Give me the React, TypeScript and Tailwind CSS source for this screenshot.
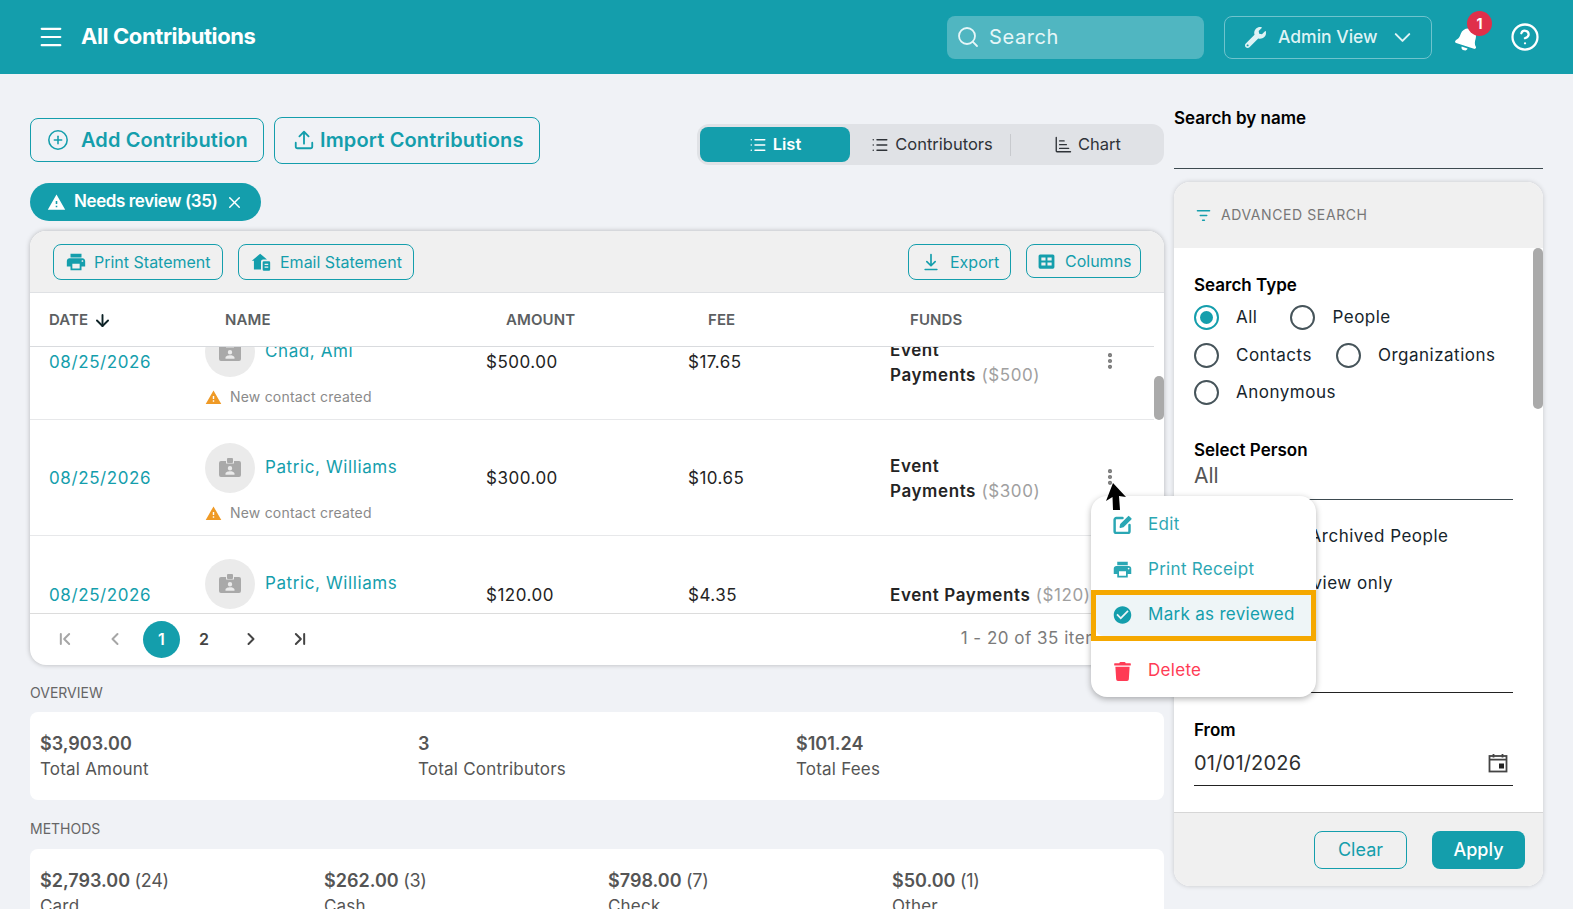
import React from 'react';
import { ChevronDown, ChevronLeft, ChevronRight, ChevronFirst, ChevronLast, CirclePlus, CircleHelp, Menu, Search, X, ArrowDown, List, EllipsisVertical } from 'lucide-react';
import { FaWrench, FaBell, FaTrash } from 'react-icons/fa';
import { MdWarning, MdPrint, MdCheckCircle } from 'react-icons/md';

const teal = 'text-[#149eac]';

const BadgeIcon = () => (
  <svg viewBox="0 0 24 24" className="w-6 h-6" fill="#a9a9a9">
    <path d="M10 2h4a1 1 0 0 1 1 1v3a1 1 0 0 1-1 1h-4a1 1 0 0 1-1-1V3a1 1 0 0 1 1-1z" />
    <path fillRule="evenodd" d="M3 5h5v2.5h8V5h5a2 2 0 0 1 2 2v12a2 2 0 0 1-2 2H3a2 2 0 0 1-2-2V7a2 2 0 0 1 2-2zm9 5a2.2 2.2 0 1 0 0 4.400a2.200 2.200 0 0 0 0-4.400zm-4.500 8.800h9V17.600c0-1.500-3-2.300-4.500-2.300s-4.500.8-4.500 2.300z" />
  </svg>
);

const UploadTray = () => (
  <svg viewBox="0 0 24 24" className="w-[22px] h-[22px]" fill="none" stroke="currentColor" strokeWidth="2" strokeLinecap="round" strokeLinejoin="round">
    <path d="M12 16V3M7 8l5-5 5 5" />
    <path d="M3 15v4a2 2 0 0 0 2 2h14a2 2 0 0 0 2-2v-4" />
  </svg>
);

const HouseMail = () => (
  <svg viewBox="0 0 24 24" className="w-5 h-5" fill="currentColor">
    <path d="M11 2 1 10.500h2.500V21H12v-9.500a2.500 2.500 0 0 1 2.500-2.500h4.700z" />
    <path fillRule="evenodd" d="M15.500 11h6a1.500 1.500 0 0 1 1.500 1.500V21a1.500 1.500 0 0 1-1.500 1.500h-6A1.500 1.500 0 0 1 14 21v-8.500a1.500 1.500 0 0 1 1.500-1.500zm.8 3v1.600h4.400V14zm0 3.400V19h4.400v-1.600z" />
  </svg>
);

const ExportIcon = () => (
  <svg viewBox="0 0 24 24" className="w-5 h-5" fill="none" stroke="currentColor" strokeWidth="2" strokeLinecap="round" strokeLinejoin="round">
    <path d="M12 3v13M7 11.500l5 5 5-5M5 21h14" />
  </svg>
);

const ColumnsIcon = () => (
  <svg viewBox="0 0 24 24" className="w-[19px] h-[19px]" fill="currentColor">
    <path fillRule="evenodd" d="M4 3h16a2 2 0 0 1 2 2v14a2 2 0 0 1-2 2H4a2 2 0 0 1-2-2V5a2 2 0 0 1 2-2zm1.500 4v3.800h5.300V7zm7.700 0v3.800h5.300V7zm-7.700 6.200V17h5.300v-3.800zm7.700 0V17h5.300v-3.800z" />
  </svg>
);

const ChartIcon = () => (
  <svg viewBox="0 0 24 24" className="w-[18px] h-[18px]" fill="none" stroke="currentColor" strokeWidth="1.800" strokeLinecap="round">
    <path d="M3 2v18a1 1 0 0 0 1 1h18M7.500 6.500h6M7.500 11.500h9M7.500 16.500h12" />
  </svg>
);

const FilterIcon = () => (
  <svg viewBox="0 0 16 16" className="w-[15px] h-[15px] text-[#149eac]" fill="none" stroke="currentColor" strokeWidth="1.500" strokeLinecap="round">
    <path d="M1.500 3h13M4.500 8h7M7 13h2" />
  </svg>
);

const EditIcon = () => (
  <svg viewBox="0 0 24 24" className="w-[22px] h-[22px]" fill="none" stroke="currentColor" strokeWidth="2.800" strokeLinecap="round" strokeLinejoin="round">
    <path d="M12 4H5a2 2 0 0 0-2 2v13a2 2 0 0 0 2 2h13a2 2 0 0 0 2-2v-7" />
    <path d="M9.500 14.500l.8-3.300 8.700-8.700 2.500 2.500-8.700 8.700z" fill="currentColor" strokeWidth="1.800" />
  </svg>
);

const CalendarIcon = () => (
  <svg viewBox="0 0 20 20" className="w-5 h-5" fill="none" stroke="#444" strokeWidth="1.800">
    <rect x="1.500" y="3" width="17" height="15.500" />
    <path d="M1.500 6.700h17M5.500 1v3.500M14.500 1v3.500" />
    <rect x="11" y="10.500" width="5" height="5" fill="#222" stroke="none" />
  </svg>
);

const CursorArrow = () => (
  <svg viewBox="0 0 20 27" className="w-5 h-[27px]" fill="#000">
    <path d="M7 0 20 14l-7-1 1 14H7l-.5-13L0 18z" />
  </svg>
);

const OutlineBtn = ({ icon, label, className }: { icon: React.ReactNode; label: string; className: string }) => (
  <button className={`flex items-center border border-[#149eac] rounded-lg text-[#149eac] ${className}`}>
    {icon}
    <span>{label}</span>
  </button>
);

const Radio = ({ checked, label }: { checked?: boolean; label: string }) => (
  <label className="flex items-center gap-[17px]">
    <span className={`w-[25px] h-[25px] rounded-full border-2 flex items-center justify-center shrink-0 ${checked ? 'border-[#149eac]' : 'border-[#46545a]'}`}>
      {checked && <span className="w-[13px] h-[13px] rounded-full bg-[#149eac]" />}
    </span>
    <span className="text-[17px] tracking-[0.5px] text-[#16242c]">{label}</span>
  </label>
);

type RowData = { amount: string; fee: string; paid: string; name: string; warn: boolean; rowClass: string; oneLine?: boolean };

const rows: RowData[] = [
  { amount: '$500.00', fee: '$17.65', paid: '($500)', name: 'Chad, Ami', warn: true, rowClass: 'border-b border-[#e7e8ea]' },
  { amount: '$300.00', fee: '$10.65', paid: '($300)', name: 'Patric, Williams', warn: true, rowClass: 'border-b border-[#e7e8ea]' },
  { amount: '$120.00', fee: '$4.35', paid: '($120)', name: 'Patric, Williams', warn: false, rowClass: '', oneLine: true },
];

const TableRow = ({ r }: { r: RowData }) => (
  <div className={`h-[116px] flex items-center text-[17px] tracking-[0.6px] ${r.rowClass}`}>
    <div className={`w-[175px] pl-[19px] pt-[3px] ${teal}`}>08/25/2026</div>
    <div className="w-[281px] self-start pt-[23px]">
      <div className="flex items-center gap-[10px]">
        <div className="w-[50px] h-[50px] rounded-full bg-[#ebebeb] flex items-center justify-center"><BadgeIcon /></div>
        <span className={teal}>{r.name}</span>
      </div>
      {r.warn && (
        <div className="flex items-center gap-[8px] mt-[10px] text-sm text-[#8a8a8a] tracking-[0.2px]">
          <MdWarning className="w-[17px] h-[17px] text-[#ef9a26]" />
          <span>New contact created</span>
        </div>
      )}
    </div>
    <div className="w-[202px] pt-[3px] text-[#242424] tracking-[0.5px]">{r.amount}</div>
    <div className="w-[202px] pt-[3px] text-[#242424] tracking-[0.5px]">{r.fee}</div>
    <div className="w-[210px] pt-[2px] leading-[25px] text-[#242424]">
      {r.oneLine ? (
        <span className="whitespace-nowrap"><b className="font-semibold">Event Payments</b> <span className="text-[#a0a0a0]">{r.paid}</span></span>
      ) : (
        <>
          <b className="font-semibold">Event</b>
          <br />
          <b className="font-semibold">Payments</b> <span className="text-[#a0a0a0]">{r.paid}</span>
        </>
      )}
    </div>
    {!r.oneLine && <EllipsisVertical className="w-5 h-5 text-[#777] -mt-[1px]" strokeWidth={3} />}
  </div>
);

const Stat = ({ value, count, label }: { value: string; count?: string; label: string }) => (
  <div>
    <div className="text-[18px] leading-[26px] font-semibold text-[#555]">
      {value} {count && <span className="font-normal tracking-[-0.3px]">{count}</span>}
    </div>
    <div className="text-[17px] leading-[24px] text-[#555] tracking-[0.2px]">{label}</div>
  </div>
);

const MenuItem = ({ icon, label, className }: { icon: React.ReactNode; label: string; className?: string }) => (
  <div className={`flex items-center gap-[15px] pl-[21px] text-[17px] tracking-[0.3px] ${className ?? ''}`}>
    <span className="w-[21px] flex justify-center">{icon}</span>
    <span>{label}</span>
  </div>
);

export default function App() {
  return (
    <div className="relative h-[909px] overflow-hidden bg-[#f0f2f6] font-['Inter',sans-serif]">
      <header className="h-[74px] bg-[#149eac] flex items-center text-white">
        <Menu className="w-[28px] h-[28px] ml-[37px]" strokeWidth={1.800} />
        <h1 className="ml-[16px] -mt-[1px] text-[22px] font-bold tracking-[-0.4px]">All Contributions</h1>
        <div className="ml-auto w-[257px] h-[43px] rounded-lg bg-[#50b6c1] flex items-center pl-[9px] gap-[9px]">
          <Search className="w-[24px] h-[24px] text-[#e6f6f8]" strokeWidth={1.800} />
          <span className="text-[20px] tracking-[0.6px] text-[#e6f6f8]">Search</span>
        </div>
        <div className="ml-[20px] w-[208px] h-[43px] rounded-lg border border-[#6fc3cd] flex items-center pl-[20px] text-[#dff3f5]">
          <FaWrench className="w-[21px] h-[21px]" />
          <span className="ml-[12px] text-[17.500px] font-medium mt-[1px]">Admin View</span>
          <ChevronDown className="w-[27px] h-[27px] ml-[11px]" strokeWidth={1.800} />
        </div>
        <div className="relative ml-[23px] w-[28px] h-[28px]">
          <FaBell className="w-[25px] h-[25px] rotate-[18deg] mt-[3px]" />
          <span className="absolute -top-[12px] left-[12px] w-[25px] h-[25px] rounded-full bg-[#e0304a] flex items-center justify-center text-sm font-bold">1</span>
        </div>
        <CircleHelp className="w-[30px] h-[30px] ml-[27px] mr-[33px]" strokeWidth={1.800} />
      </header>

      <main className="flex pl-[30px] gap-[10px]">
        <div className="w-[1134px]">
          <div className="flex items-center h-[50px] mt-[41px]">
            <OutlineBtn icon={<CirclePlus className="w-[22px] h-[22px] mr-[12px]" strokeWidth={1.700} />} label="Add Contribution" className="w-[234px] h-[44px] pl-[16px] text-[20px] font-semibold tracking-[0.1px]" />
            <OutlineBtn icon={<span className="mr-[5px]"><UploadTray /></span>} label="Import Contributions" className="w-[266px] h-[47px] ml-[10px] pl-[18px] text-[20px] font-semibold tracking-[0.15px]" />
            <div className="ml-auto w-[467px] h-[41px] mt-[9px] rounded-xl bg-[#e0e2e6] flex items-center pl-[3px] text-[16.500px] text-[#2f3338]">
              <div className="w-[150px] h-[35px] rounded-lg bg-[#149eac] text-white font-semibold flex items-center justify-center gap-[6px]">
                <List className="w-[18px] h-[18px]" />List
              </div>
              <div className="w-[160px] pl-[4px] flex items-center justify-center gap-[6px]"><List className="w-[18px] h-[18px]" />Contributors</div>
              <div className="w-px h-[22px] bg-[#c8cace]" />
              <div className="w-[152px] pl-[1px] flex items-center justify-center gap-[6px]"><ChartIcon />Chart</div>
            </div>
          </div>

          <div className="mt-[18px] w-[231px] h-[38px] rounded-full bg-[#149eac] text-white flex items-center pl-[17px] gap-[8px] text-[17px] font-semibold">
            <MdWarning className="w-[19px] h-[19px]" />
            <span className="tracking-[-0.4px]">Needs review (35)</span>
            <X className="w-[19px] h-[19px] -ml-[1px]" strokeWidth={1.800} />
          </div>

          <section className="relative mt-[10px] h-[434px] rounded-2xl bg-white shadow-[0_0_5px_rgba(0,0,0,0.25)] overflow-hidden">
            <div className="h-[62px] bg-[#f0f0f0] border-b border-[#dfe1e4] flex items-center pl-[23px] pr-[23px] pt-[1px] text-base">
              <OutlineBtn icon={<MdPrint className="w-[22px] h-[22px] mr-[7px]" />} label="Print Statement" className="w-[170px] h-[36px] pl-[11px]" />
              <OutlineBtn icon={<span className="mr-[9px]"><HouseMail /></span>} label="Email Statement" className="w-[176px] h-[36px] ml-[15px] pl-[12px]" />
              <OutlineBtn icon={<span className="mr-[9px] ml-[1px]"><ExportIcon /></span>} label="Export" className="w-[103px] h-[36px] ml-auto pl-[11px]" />
              <OutlineBtn icon={<span className="mr-[9px]"><ColumnsIcon /></span>} label="Columns" className="w-[115px] h-[34px] ml-[15px] pl-[10px] -mt-[2px]" />
            </div>
            <div className="h-[54px] mr-[10px] pt-[1px] border-b border-[#d9dbde] flex items-center text-[15px] tracking-[0.1px] font-semibold text-[#5c5f62]">
              <div className="w-[195px] pl-[19px] flex items-center gap-[5px]">DATE <ArrowDown className="w-[19px] h-[19px] text-[#0d2226]" strokeWidth={2.400} /></div>
              <div className="w-[281px]">NAME</div>
              <div className="w-[202px]">AMOUNT</div>
              <div className="w-[202px]">FEE</div>
              <div>FUNDS</div>
            </div>
            <div className="h-[267px] overflow-hidden mr-[10px] border-b border-[#dcdcdc]">
              <div className="-mt-[43px]">
                {rows.map((r, i) => <TableRow key={i} r={r} />)}
              </div>
            </div>
            <div className="absolute right-0 top-[145px] w-[10px] h-[44px] rounded-full bg-[#aaaaaa]" />
            <div className="h-[50px] flex items-center pl-[25px] pr-[54px] text-[#555]">
              <ChevronFirst className="w-5 h-5 text-[#a6a6a6]" strokeWidth={2.400} />
              <ChevronLeft className="w-5 h-5 ml-[30px] text-[#a6a6a6]" strokeWidth={2.400} />
              <span className="ml-[18px] w-[37px] h-[37px] rounded-full bg-[#149eac] text-white font-semibold flex items-center justify-center">1</span>
              <span className="ml-[19px] font-semibold text-[#444]">2</span>
              <ChevronRight className="w-5 h-5 ml-[32px] text-[#444]" strokeWidth={2.400} />
              <ChevronLast className="w-5 h-5 ml-[29px] text-[#444]" strokeWidth={2.400} />
              <span className="ml-auto text-[17px] tracking-[0.5px] text-[#7b7b7b]">1 - 20 of 35 items</span>
            </div>
          </section>

          <div className="mt-[19px] text-sm text-[#666] leading-[17px]">OVERVIEW</div>
          <div className="mt-[11px] h-[88px] rounded-lg bg-white grid grid-cols-[378px_378px_1fr] items-center pl-[10px]">
            <Stat value="$3,903.00" label="Total Amount" />
            <Stat value="3" label="Total Contributors" />
            <Stat value="$101.24" label="Total Fees" />
          </div>
          <div className="mt-[20px] text-sm text-[#666] leading-[17px]">METHODS</div>
          <div className="mt-[12px] h-[88px] rounded-lg bg-white grid grid-cols-[284px_284px_284px_1fr] items-center pl-[10px]">
            <Stat value="$2,793.00" count="(24)" label="Card" />
            <Stat value="$262.00" count="(3)" label="Cash" />
            <Stat value="$798.00" count="(7)" label="Check" />
            <Stat value="$50.00" count="(1)" label="Other" />
          </div>
        </div>

        <aside className="w-[369px]">
          <div className="h-[95px] pt-[34px] border-b border-[#3d4a50] -mb-px">
            <div className="text-[17px] font-semibold text-black leading-[21px]">Search by name</div>
          </div>
          <div className="relative mt-[14px] h-[704px] rounded-2xl bg-white shadow-[0_0_5px_rgba(0,0,0,0.18)] overflow-hidden flex flex-col">
            <div className="h-[66px] shrink-0 bg-[#f0f0f0] flex items-center pl-[22px] gap-[10px] text-sm text-[#777] tracking-[0.6px]">
              <FilterIcon />ADVANCED SEARCH
            </div>
            <div className="absolute right-0 top-[66px] w-[10px] h-[161px] rounded-full bg-[#aaaaaa]" />
            <div className="flex-1 pl-[20px] pr-[30px] overflow-hidden">
              <div className="mt-[27px] text-[17px] font-semibold text-black leading-[21px]">Search Type</div>
              <div className="mt-[9px] flex flex-col gap-[12px]">
                <div className="flex gap-[33px]"><Radio checked label="All" /><Radio label="People" /></div>
                <div className="flex gap-[24px]"><Radio label="Contacts" /><Radio label="Organizations" /></div>
                <Radio label="Anonymous" />
              </div>
              <div className="mt-[34px] text-[17px] font-semibold text-black leading-[21px]">Select Person</div>
              <div className="h-[39px] border-b border-[#3d4a50] text-[21px] text-[#555] leading-[30px]">All</div>
              <div className="mt-[23px] text-[17px] tracking-[0.5px] text-[#16242c] leading-[26px] pl-[48px]">Include Archived People</div>
              <div className="mt-[21px] text-[17px] tracking-[0.5px] text-[#16242c] leading-[26px] pl-[42px]">Needs review only</div>
              <div className="h-[97px] border-b border-[#222]" />
              <div className="mt-[27px] text-[17px] font-semibold text-black leading-[21px]">From</div>
              <div className="h-[45px] border-b border-[#222] flex items-center justify-between pr-[5px] text-[20px] text-[#2f2f2f] tracking-[0.2px]">
                01/01/2026 <CalendarIcon />
              </div>
            </div>
            <div className="h-[74px] shrink-0 bg-[#f0f0f0] border-t border-[#d6d6d6] flex items-center justify-end gap-[25px] pr-[18px] text-[18px]">
              <button className="w-[93px] h-[38px] rounded-lg border border-[#149eac] text-[#149eac]">Clear</button>
              <button className="w-[93px] h-[38px] rounded-lg bg-[#149eac] text-white font-medium">Apply</button>
            </div>
          </div>
        </aside>
      </main>

      {/* row action menu, open over the table and the filter panel */}
      <div className="absolute left-[1091px] top-[496px] w-[225px] h-[201px] rounded-2xl bg-white shadow-[0_2px_6px_rgba(0,0,0,0.3)] text-[#149eac]">
        <MenuItem icon={<EditIcon />} label="Edit" className="h-[46px] mt-[5px] pt-[2px] opacity-90" />
        <MenuItem icon={<MdPrint className="w-[23px] h-[23px]" />} label="Print Receipt" className="h-[45px] opacity-90" />
        <div className="relative h-[51px] -mt-[2px] border-[5px] border-[#f5a800]">
          <div className="h-full pb-[2px] bg-[#eef5f7] rounded-bl-lg flex items-center gap-[15px] pl-[16px] text-[17px] tracking-[0.3px]">
            <span className="w-[21px] flex justify-center"><MdCheckCircle className="w-[22px] h-[22px]" /></span>
            Mark as reviewed
          </div>
        </div>
        <MenuItem icon={<FaTrash className="w-[17px] h-[19px]" />} label="Delete" className="h-[56px] pt-[4px] text-[#ff3b55]" />
      </div>
      <div className="absolute left-[1106px] top-[483px]"><CursorArrow /></div>
    </div>
  );
}
